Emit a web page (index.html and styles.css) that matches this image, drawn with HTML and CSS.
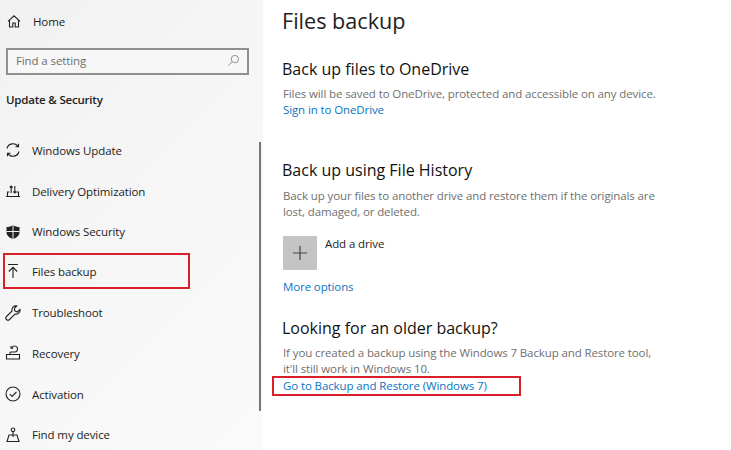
FILE: index.html
```html
<!DOCTYPE html>
<html lang="en">
<head>
<meta charset="utf-8">
<title>Files backup</title>
<link rel="stylesheet" href="styles.css">
</head>
<body>
<div class="window">
  <aside class="sidebar">
    <div class="home">
      <svg class="icon" viewBox="0 0 16 16"><path d="M2 8.300 8 2.800l6 5.500M3.500 7v7h3.300V10h2.400v4h3.300V7"/></svg>
      <span>Home</span>
    </div>
    <div class="search">
      <span>Find a setting</span>
      <svg class="search-icon" viewBox="0 0 14 14"><circle cx="8.500" cy="5.500" r="4"/><path d="M5.600 8.400 1.500 12.500"/></svg>
    </div>
    <h2 class="section">Update &amp; Security</h2>
    <nav class="nav">
      <div class="item">
        <svg class="icon" viewBox="0 0 16 16"><path d="M2 6.500A6.200 6.200 0 0 1 13.200 4.600M14 9.500A6.200 6.200 0 0 1 2.800 11.400M13.500 1.800v3h-3M2.500 14.200v-3h3"/></svg>
        <span>Windows Update</span>
      </div>
      <div class="item">
        <svg class="icon" viewBox="0 0 16 16"><path d="M2.500 13V9h2M13.500 13V9h-2M1 13.500h14M6.200 10V3M4.800 4.500 6.200 3l1.400 1.500M9.800 3v7M8.400 8.500 9.800 10l1.400-1.500"/></svg>
        <span>Delivery Optimization</span>
      </div>
      <div class="item">
        <svg class="icon" viewBox="0 0 16 16"><path class="solid" d="M8 1c2 1.500 4 2 6.500 2v5c0 3.500-3 6-6.500 7-3.500-1-6.500-3.500-6.500-7V3C4 3 6 2.500 8 1z"/><path class="cut" d="M8 1v14M1.500 7.500h13"/></svg>
        <span>Windows Security</span>
      </div>
      <div class="item current">
        <svg class="icon" viewBox="0 0 16 16"><path d="M3 1.500h10M8 15V4.500M3.800 8.500 8 4.300l4.200 4.200"/></svg>
        <span>Files backup</span>
      </div>
      <div class="item">
        <svg class="icon" viewBox="0 0 16 16"><path d="M15 4.500 12.300 7 9.800 5.800 9.400 3.400 11.800 1a4 4 0 0 0-4.700 5L1.500 11.500a2 2 0 0 0 3 3L10 9a4 4 0 0 0 5-4.500z"/></svg>
        <span>Troubleshoot</span>
      </div>
      <div class="item">
        <svg class="icon" viewBox="0 0 16 16"><path d="M1.500 9.500h13v4.500h-13zM5 9.500V8.200A1 1 0 0 1 6 7h4a3 3 0 1 0-3-4.500M6 1v2.200h2.300"/></svg>
        <span>Recovery</span>
      </div>
      <div class="item">
        <svg class="icon" viewBox="0 0 16 16"><circle cx="8" cy="8" r="7"/><path d="m4.800 8.200 2.300 2.300 4.300-4.500"/></svg>
        <span>Activation</span>
      </div>
      <div class="item">
        <svg class="icon" viewBox="0 0 16 16"><circle cx="8" cy="2.800" r="1.800"/><path d="M8 4.600V10M4 8h8l2 6.500H2z"/></svg>
        <span>Find my device</span>
      </div>
    </nav>
    <div class="scrollbar"></div>
  </aside>
  <main class="content">
    <h1>Files backup</h1>
    <section class="onedrive">
      <h3>Back up files to OneDrive</h3>
      <p>Files will be saved to OneDrive, protected and accessible on any device.</p>
      <a class="link">Sign in to OneDrive</a>
    </section>
    <section class="history">
      <h3>Back up using File History</h3>
      <p>Back up your files to another drive and restore them if the originals are<br>lost, damaged, or deleted.</p>
      <div class="add">
        <div class="add-tile"><svg viewBox="0 0 14 14"><path d="M7 0v14M0 7h14"/></svg></div>
        <span>Add a drive</span>
      </div>
      <a class="link">More options</a>
    </section>
    <section class="older">
      <h3>Looking for an older backup?</h3>
      <p>If you created a backup using the Windows 7 Backup and Restore tool,<br>it'll still work in Windows 10.</p>
      <a class="link boxed">Go to Backup and Restore (Windows 7)</a>
    </section>
  </main>
</div>
</body>
</html>
```
FILE: styles.css
```css
html, body {
  margin: 0;
  padding: 0;
  height: 450px;
  overflow: hidden;
  background: #fff;
}
.window {
  display: flex;
  width: 731px;
  height: 450px;
  overflow: hidden;
  font-family: "Open Sans", "Noto Sans", sans-serif;
  color: #222;
  font-size: 11.500px;
  letter-spacing: -0.110px;
}
.sidebar {
  position: relative;
  box-sizing: border-box;
  width: 263px;
  flex: none;
  padding-top: 11px;
  background: linear-gradient(135deg, #f1f1f1 0%, #f6f6f6 45%, #fafafa 100%);
}
.icon {
  width: 16px;
  height: 16px;
  flex: none;
  fill: none;
  stroke: #222;
  stroke-width: 1.100;
}
.home {
  display: flex;
  align-items: center;
  gap: 11px;
  height: 20px;
  padding-left: 6px;
  margin-bottom: 17px;
}
.search {
  display: flex;
  align-items: center;
  justify-content: space-between;
  box-sizing: border-box;
  width: 243px;
  height: 27px;
  margin-left: 6px;
  padding: 0 7px 2px 8px;
  border: 2px solid #8f8f8f;
  background: #f7f7f7;
  color: #6e6e6e;
}
.search-icon {
  width: 13px;
  height: 13px;
  fill: none;
  stroke: #8a8a8a;
  stroke-width: 1;
}
.section {
  margin: 16px 0 0 6px;
  height: 18px;
  line-height: 18px;
  font-size: 11.500px;
  font-weight: 600;
  letter-spacing: -0.200px;
}
.nav {
  display: flex;
  flex-direction: column;
  margin-top: 21.200px;
}
.item {
  display: flex;
  align-items: center;
  gap: 11px;
  box-sizing: border-box;
  height: 40.600px;
  padding-left: 5px;
}
.current {
  width: 187px;
  height: 36px;
  margin: 1px 0 3.600px 3px;
  padding: 1px 0 0;
  border: 2px solid #d9202a;
}
.solid {
  fill: #222;
  stroke: none;
}
.cut {
  stroke: #f5f5f5;
  stroke-width: 1;
}
.scrollbar {
  position: absolute;
  left: 259px;
  top: 142px;
  width: 2px;
  height: 269px;
  background: #777;
}
.content {
  flex: 1;
  box-sizing: border-box;
  padding: 5px 0 0 19px;
}
h1 {
  margin: 0;
  height: 32px;
  line-height: 32px;
  font-size: 21.600px;
  font-weight: 400;
  letter-spacing: 0;
  color: #222;
}
h3 {
  margin: 0;
  font-size: 16px;
  line-height: 22px;
  font-weight: 400;
  letter-spacing: 0;
  color: #111;
}
p {
  margin: 0 0 0 1px;
  color: #6f6f6f;
  line-height: 16px;
}
.link {
  display: block;
  margin-left: 1px;
  color: #0a74c2;
  line-height: 16px;
}
.onedrive {
  margin-top: 21px;
}
.onedrive p {
  margin-top: 6px;
}
.history {
  margin-top: 41px;
}
.history p {
  margin-top: 7px;
}
.add {
  display: flex;
  gap: 8px;
  margin: 16px 0 0 1px;
  color: #222;
}
.add span {
  line-height: 16px;
}
.add-tile {
  display: flex;
  align-items: center;
  justify-content: center;
  width: 34px;
  height: 34px;
  background: #c4c4c4;
}
.add-tile svg {
  width: 14px;
  height: 14px;
  fill: none;
  stroke: #444;
  stroke-width: 1.200;
}
.history .link {
  margin-top: 9px;
}
.older {
  margin-top: 22px;
}
.older p {
  margin-top: 6px;
}
.boxed {
  box-sizing: border-box;
  width: 249px;
  height: 20px;
  margin: -1px 0 0 -10px;
  padding-left: 9px;
  border: 2px solid #d9202a;
}
```
